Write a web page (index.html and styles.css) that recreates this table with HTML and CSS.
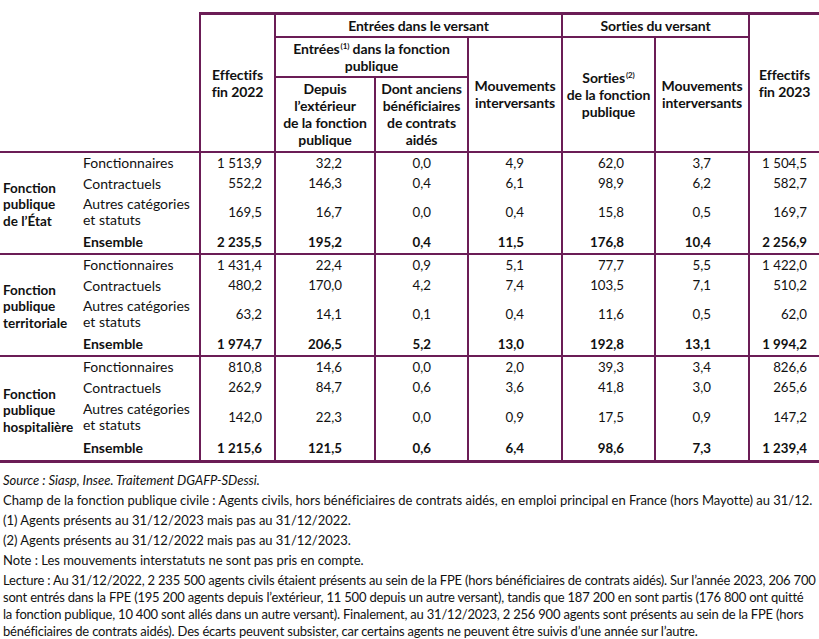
FILE: index.html
```html
<!DOCTYPE html>
<html lang="fr">
<head>
<meta charset="utf-8">
<title>Flux d'entrées et de sorties</title>
<link rel="stylesheet" href="styles.css">
</head>
<body>
<table class="flux">
  <colgroup>
    <col class="c-grp"><col class="c-lab"><col class="c-eff"><col class="c-dep"><col class="c-dont"><col class="c-mv"><col class="c-sort"><col class="c-mv2"><col class="c-eff2">
  </colgroup>
  <thead>
    <tr class="h1">
      <th class="corner" colspan="2" rowspan="3"></th>
      <th class="top" rowspan="3">Effectifs<br>fin 2022</th>
      <th class="top" colspan="3">Entrées dans le versant</th>
      <th class="top" colspan="2">Sorties du versant</th>
      <th class="top" rowspan="3">Effectifs<br>fin 2023</th>
    </tr>
    <tr class="h2">
      <th colspan="2">Entrées<sup>(1)</sup> dans la fonction<br>publique</th>
      <th rowspan="2">Mouvements<br>interversants</th>
      <th rowspan="2">Sorties<sup>(2)</sup><br>de la fonction<br>publique</th>
      <th rowspan="2">Mouvements<br>interversants</th>
    </tr>
    <tr class="h3">
      <th>Depuis<br>l’extérieur<br>de la fonction<br>publique</th>
      <th>Dont anciens<br>bénéficiaires<br>de contrats<br>aidés</th>
    </tr>
  </thead>
  <tbody>
    <tr class="r-a">
      <td class="grp" rowspan="4">Fonction<br>publique<br>de l’État</td>
      <td class="lab">Fonctionnaires</td>
      <td class="n p1">1 513,9</td><td class="n p2">32,2</td><td class="n p3">0,0</td><td class="n p4">4,9</td><td class="n p5">62,0</td><td class="n p6">3,7</td><td class="n p7">1 504,5</td>
    </tr>
    <tr class="r-b">
      <td class="lab">Contractuels</td>
      <td class="n p1">552,2</td><td class="n p2">146,3</td><td class="n p3">0,4</td><td class="n p4">6,1</td><td class="n p5">98,9</td><td class="n p6">6,2</td><td class="n p7">582,7</td>
    </tr>
    <tr class="r-c">
      <td class="lab lab2">Autres catégories<br>et statuts</td>
      <td class="n p1">169,5</td><td class="n p2">16,7</td><td class="n p3">0,0</td><td class="n p4">0,4</td><td class="n p5">15,8</td><td class="n p6">0,5</td><td class="n p7">169,7</td>
    </tr>
    <tr class="r-d tot">
      <td class="lab">Ensemble</td>
      <td class="n p1">2 235,5</td><td class="n p2">195,2</td><td class="n p3">0,4</td><td class="n p4">11,5</td><td class="n p5">176,8</td><td class="n p6">10,4</td><td class="n p7">2 256,9</td>
    </tr>
  </tbody>
  <tbody>
    <tr class="r-a">
      <td class="grp" rowspan="4">Fonction<br>publique<br>territoriale</td>
      <td class="lab">Fonctionnaires</td>
      <td class="n p1">1 431,4</td><td class="n p2">22,4</td><td class="n p3">0,9</td><td class="n p4">5,1</td><td class="n p5">77,7</td><td class="n p6">5,5</td><td class="n p7">1 422,0</td>
    </tr>
    <tr class="r-b">
      <td class="lab">Contractuels</td>
      <td class="n p1">480,2</td><td class="n p2">170,0</td><td class="n p3">4,2</td><td class="n p4">7,4</td><td class="n p5">103,5</td><td class="n p6">7,1</td><td class="n p7">510,2</td>
    </tr>
    <tr class="r-c">
      <td class="lab lab2">Autres catégories<br>et statuts</td>
      <td class="n p1">63,2</td><td class="n p2">14,1</td><td class="n p3">0,1</td><td class="n p4">0,4</td><td class="n p5">11,6</td><td class="n p6">0,5</td><td class="n p7">62,0</td>
    </tr>
    <tr class="r-d tot">
      <td class="lab">Ensemble</td>
      <td class="n p1">1 974,7</td><td class="n p2">206,5</td><td class="n p3">5,2</td><td class="n p4">13,0</td><td class="n p5">192,8</td><td class="n p6">13,1</td><td class="n p7">1 994,2</td>
    </tr>
  </tbody>
  <tbody class="last">
    <tr class="r-a">
      <td class="grp" rowspan="4">Fonction<br>publique<br>hospitalière</td>
      <td class="lab">Fonctionnaires</td>
      <td class="n p1">810,8</td><td class="n p2">14,6</td><td class="n p3">0,0</td><td class="n p4">2,0</td><td class="n p5">39,3</td><td class="n p6">3,4</td><td class="n p7">826,6</td>
    </tr>
    <tr class="r-b">
      <td class="lab">Contractuels</td>
      <td class="n p1">262,9</td><td class="n p2">84,7</td><td class="n p3">0,6</td><td class="n p4">3,6</td><td class="n p5">41,8</td><td class="n p6">3,0</td><td class="n p7">265,6</td>
    </tr>
    <tr class="r-c r-c-last">
      <td class="lab lab2">Autres catégories<br>et statuts</td>
      <td class="n p1">142,0</td><td class="n p2">22,3</td><td class="n p3">0,0</td><td class="n p4">0,9</td><td class="n p5">17,5</td><td class="n p6">0,9</td><td class="n p7">147,2</td>
    </tr>
    <tr class="r-d r-end tot">
      <td class="lab">Ensemble</td>
      <td class="n p1">1 215,6</td><td class="n p2">121,5</td><td class="n p3">0,6</td><td class="n p4">6,4</td><td class="n p5">98,6</td><td class="n p6">7,3</td><td class="n p7">1 239,4</td>
    </tr>
  </tbody>
</table>
<div class="notes">
  <p class="src">Source : Siasp, Insee. Traitement DGAFP-SDessi.</p>
  <p>Champ de la fonction publique civile : Agents civils, hors bénéficiaires de contrats aidés, en emploi principal en France (hors Mayotte) au 31/12.</p>
  <p>(1) Agents présents au 31/12/2023 mais pas au 31/12/2022.</p>
  <p>(2) Agents présents au 31/12/2022 mais pas au 31/12/2023.</p>
  <p>Note : Les mouvements interstatuts ne sont pas pris en compte.</p>
  <p class="lect">Lecture : Au 31/12/2022, 2 235 500 agents civils étaient présents au sein de la FPE (hors bénéficiaires de contrats aidés). Sur l’année 2023, 206 700<br>sont entrés dans la FPE (195 200 agents depuis l’extérieur, 11 500 depuis un autre versant), tandis que 187 200 en sont partis (176 800 ont quitté<br>la fonction publique, 10 400 sont allés dans un autre versant). Finalement, au 31/12/2023, 2 256 900 agents sont présents au sein de la FPE (hors<br>bénéficiaires de contrats aidés). Des écarts peuvent subsister, car certains agents ne peuvent être suivis d’une année sur l’autre.</p>
</div>
</body>
</html>
```

FILE: styles.css
```css
html, body {
  margin: 0;
  padding: 0;
  background: #ffffff;
}
body {
  font-family: Lato, "Open Sans", sans-serif;
  font-size: 13px;
  color: #111111;
  width: 819px;
}
.flux {
  border-collapse: collapse;
  table-layout: fixed;
  width: 819px;
  margin-top: 12px;
}
.c-grp { width: 80px; }
.c-lab { width: 120px; }
.c-eff { width: 75px; }
.c-dep { width: 100px; }
.c-dont { width: 93px; }
.c-mv { width: 94px; }
.c-sort { width: 93px; }
.c-mv2 { width: 94px; }
.c-eff2 { width: 70px; }

.flux th {
  font-weight: 700;
  font-size: 14px;
  letter-spacing: -0.1px;
  line-height: 17px;
  text-align: center;
  vertical-align: middle;
  padding: 0;
  border: 2px solid #6b1d56;
  border-right: none;
}
.flux th.top { border-top: 3px solid #6b1d56; }
.flux th.corner {
  border: none;
  border-bottom: 2px solid #6b1d56;
}
.h1 { height: 23px; }
.h2 { height: 40px; }
.h3 { height: 75px; }
.flux sup {
  font-size: 8px;
  line-height: 0;
  vertical-align: 5px;
  margin-left: 1px;
}

.flux td {
  padding: 0;
  line-height: 14px;
  vertical-align: middle;
}
.flux tbody { border-bottom: 2px solid #6b1d56; }
.flux tbody.last { border-bottom: 3px solid #6b1d56; }
.r-a { height: 21px; }
.r-b { height: 21px; }
.r-c { height: 37px; }
.r-c-last { height: 38px; }
.r-d { height: 23px; }
.r-end { height: 26px; }
.grp {
  font-weight: 700;
  font-size: 13.5px;
  line-height: 16.5px !important;
  padding-left: 3px !important;
  padding-top: 4px !important;
}
.lab {
  font-size: 14px;
  line-height: 15px !important;
  padding-left: 3px !important;
}
.lab2 { line-height: 16px !important; }
.tot td { font-weight: 700; }
.n {
  text-align: right;
  font-size: 13.3px;
  border-left: 2px solid #6b1d56;
}
.p1 { padding-right: 12px !important; }
.p2 { padding-right: 32px !important; }
.p3 { padding-right: 36px !important; }
.p4 { padding-right: 37px !important; }
.p5 { padding-right: 30px !important; }
.p6 { padding-right: 37px !important; }
.p7 { padding-right: 12px !important; }

.notes {
  padding: 9px 0 0 3px;
}
.notes p {
  margin: 0 0 3px;
  line-height: 17px;
  white-space: nowrap;
  letter-spacing: -0.02px;
}
.notes .lect { letter-spacing: -0.2px; }
.notes .src { font-style: italic; }
```
